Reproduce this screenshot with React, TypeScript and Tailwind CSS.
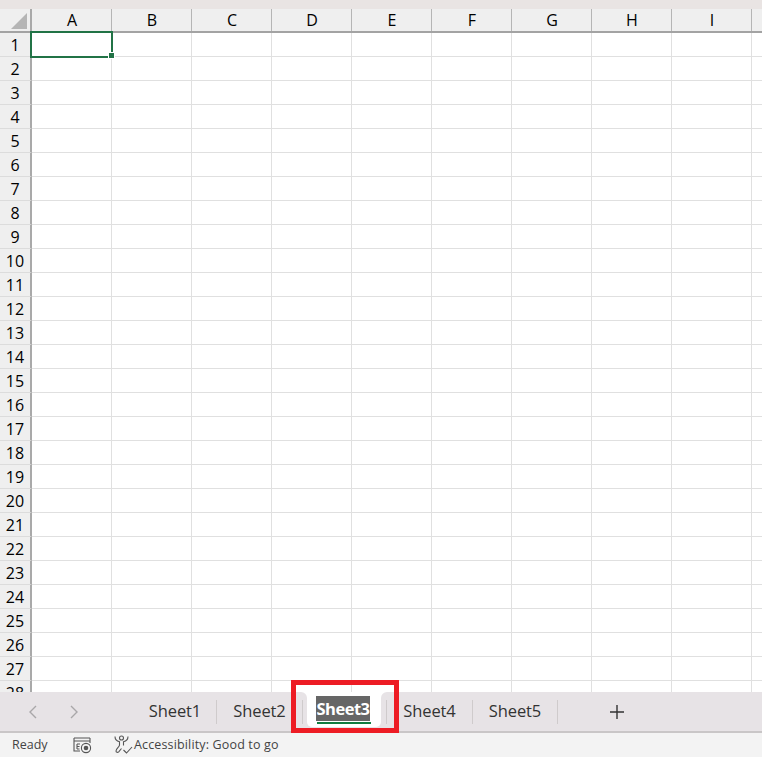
const cols = ["A", "B", "C", "D", "E", "F", "G", "H", "I"];
const rows = Array.from({ length: 28 }, (_, i) => i + 1);
const font = "font-['Open_Sans','Noto_Sans',sans-serif]";

function Tab({ name, w }: { name: string; w: string }) {
  return (
    <div className={`${w} flex h-6 shrink-0 items-center justify-center border-r border-[#cfcbcc] text-[16.5px] tracking-[-0.1px] text-[#333]`}>
      {name}
    </div>
  );
}

export default function App() {
  return (
    <div className={`relative flex h-[757px] w-[762px] flex-col overflow-hidden bg-white ${font}`}>
      <div className="h-[9px] shrink-0 bg-[#e9e4e3]" />
      <div className="flex h-6 shrink-0 border-b-2 border-[#a3a3a3] bg-[#efefef] text-[16px] text-black">
        <div className="flex w-[32px] shrink-0 items-end justify-end border-r-2 border-[#a9a9a9] pb-0.5 pr-[3px]">
          <svg width="16" height="16" viewBox="0 0 16 16"><path d="M16 0V16H0Z" fill="#b5b5b5" /></svg>
        </div>
        {cols.map((c) => (
          <div key={c} className="flex w-[80px] shrink-0 items-center justify-center border-r border-[#b5b5b5] pl-[1px]">{c}</div>
        ))}
      </div>
      <div className="min-h-0 flex-1 overflow-hidden">
        {rows.map((r) => (
          <div key={r} className="flex h-6 shrink-0">
            <div className="flex w-[32px] shrink-0 items-center justify-center border-r-2 border-b border-r-[#a9a9a9] border-b-[#dcdcdc] bg-[#efefef] pt-[1px] text-[16px] text-black">{r}</div>
            {cols.map((c) => (
              <div key={c} className="w-[80px] shrink-0 border-r border-b border-[#e0e0e0]" />
            ))}
            <div className="w-[30px] shrink-0 border-b border-[#e0e0e0]" />
          </div>
        ))}
      </div>
      <div className="flex h-[41px] shrink-0 items-center border-b-2 border-[#c9c6c7] bg-[#e7e3e6]">
        <div className="flex w-[134px] shrink-0 items-center pl-[27px] text-[#a9a7a9]">
          <svg width="12" height="14" viewBox="0 0 12 14" fill="none" stroke="currentColor" strokeWidth="1.4"><path d="M9 1 3 7l6 6" /></svg>
          <svg className="ml-[29px]" width="12" height="14" viewBox="0 0 12 14" fill="none" stroke="currentColor" strokeWidth="1.4"><path d="m3 1 6 6-6 6" /></svg>
        </div>
        <Tab name="Sheet1" w="w-[83px]" />
        <Tab name="Sheet2" w="w-[86px]" />
        <div className="relative flex h-6 w-[84px] shrink-0 self-center border-r border-[#cfcbcc]">
          <div className="absolute left-[4px] top-[-8px] h-[35px] w-[74px] rounded-b-[5px] bg-white">
            <svg className="absolute left-[-6px] top-0" width="6" height="6" viewBox="0 0 6 6"><path d="M0 0H6V6A6 6 0 0 0 0 0Z" fill="#fff" /></svg>
            <svg className="absolute right-[-6px] top-0" width="6" height="6" viewBox="0 0 6 6"><path d="M6 0H0V6A6 6 0 0 1 6 0Z" fill="#fff" /></svg>
            <div className="ml-[9px] mt-[4px] flex h-[28px] w-[55px] flex-col">
              <span className="h-[25px] w-[54px] bg-[#666666] text-center text-[16.5px] font-bold leading-[25px] tracking-[-0.5px] text-white">Sheet3</span>
              <span className="ml-[1px] mt-[1px] h-[2px] w-[54px] bg-[#107c41]" />
            </div>
          </div>
        </div>
        <Tab name="Sheet4" w="w-[86px]" />
        <Tab name="Sheet5" w="w-[85px]" />
        <svg className="ml-[51px]" width="16" height="16" viewBox="0 0 16 16" stroke="#333" strokeWidth="1.4"><path d="M8 1v14M1 8h14" /></svg>
      </div>
      <div className="flex h-6 shrink-0 items-center bg-[#f3f3f3] pl-3 text-[12.5px] text-[#444]">
        <span className="w-[61px] shrink-0">Ready</span>
        <svg className="shrink-0" width="19" height="18" viewBox="0 0 19 18" fill="none" stroke="#555" strokeWidth="1.1">
          <path d="M1 2h16M1 5h16M1 2v13h6M17 2v5" />
          <path d="M4 8h3M4 8v5M4 10.500h2.500M4 13h2.500" />
          <circle cx="13" cy="12" r="4.600" />
          <circle cx="13" cy="12" r="2.300" fill="#555" stroke="none" />
        </svg>
        <svg className="ml-[21px] shrink-0" width="20" height="20" viewBox="0 0 20 20" fill="none" stroke="#555" strokeWidth="1.1">
          <circle cx="8.500" cy="3" r="2" />
          <path d="M2 1.500c0 3 2.500 4.800 4.500 5.200v3.300c0 2-3.500 3.500-3.500 6 0 1.500 1.700 1.800 2.700.8l2.800-3.300" />
          <path d="M15 1.500c0 3-2.500 4.800-4.500 5.200v3.800" />
          <path d="m10.500 15 3 3L19 12" />
        </svg>
        <span className="ml-[1px] shrink-0 tracking-[0.15px]">Accessibility: Good to go</span>
      </div>
      <div className="absolute left-[30px] top-[31px] h-[27px] w-[83px] border-2 border-[#217346]">
        <div className="absolute bottom-[-3px] right-[-4px] h-[7px] w-[7px] border border-white bg-[#217346]" />
      </div>
      <div className="pointer-events-none absolute left-[291px] top-[680px] h-[53px] w-[108px] border-[5px] border-[#ed1c24]" />
    </div>
  );
}
